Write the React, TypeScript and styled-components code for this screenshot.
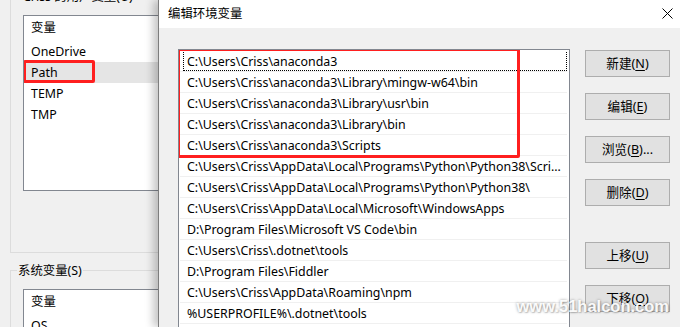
import React from 'react';
import styled, { createGlobalStyle } from 'styled-components';

const Global = createGlobalStyle`
  html, body { margin: 0; padding: 0; background: #f0f0f0; }
  body {
    font-family: "Noto Sans", "Noto Sans CJK SC", sans-serif;
    font-size: 12.4px;
    color: #000;
  }
`;

const Screen = styled.div`
  position: relative;
  width: 680px;
  height: 327px;
  display: flex;
  overflow: hidden;
  background: #f0f0f0;
`;

/* ---------- left (background) dialog ---------- */
const LeftPane = styled.div`
  width: 158px;
  flex: none;
  display: flex;
  flex-direction: column;
  padding-left: 10px;
  box-sizing: border-box;
`;

const UserGroup = styled.div`
  height: 253px;
  flex: none;
  box-sizing: border-box;
  border-left: 1px solid #dcdcdc;
  border-bottom: 1px solid #dcdcdc;
  padding-left: 12px;
  display: flex;
  flex-direction: column;
`;

const SysGroup = styled.div`
  flex: 1;
  margin-top: 17px;
  border-top: 1px solid #dcdcdc;
  border-left: 1px solid #dcdcdc;
  padding-left: 12px;
  display: flex;
  flex-direction: column;
`;

const GroupCaption = styled.div<{ $clipped?: boolean }>`
  height: 16px;
  line-height: 16px;
  white-space: nowrap;
  background: #f0f0f0;
  width: fit-content;
  padding: 0 1px;
  margin-top: ${(p) => (p.$clipped ? '-11px' : '-8px')};
  margin-left: ${(p) => (p.$clipped ? '-1px' : '-6px')};
`;

const VarList = styled.div<{ $h: number; $top: number }>`
  margin-top: ${(p) => p.$top}px;
  height: ${(p) => p.$h}px;
  flex: none;
  box-sizing: border-box;
  background: #fff;
  border: 1px solid #828790;
  border-right: none;
  overflow: hidden;
`;

const VarHeader = styled.div`
  height: 25px;
  line-height: 24px;
  padding-left: 7px;
`;

const VarRow = styled.div<{ $selected?: boolean }>`
  position: relative;
  height: 21px;
  line-height: 21px;
  padding-left: 7px;
  background: ${(p) => (p.$selected ? '#e5e5e5' : 'transparent')};
`;

const RedMark = styled.span`
  position: absolute;
  top: -2px;
  left: -1px;
  width: 72px;
  height: 23px;
  box-sizing: border-box;
  border: 3px solid #ff1f1f;
  border-radius: 2px;
`;

/* ---------- front dialog ---------- */
const Dialog = styled.div`
  position: relative;
  z-index: 1;
  flex: 1;
  min-width: 0;
  display: flex;
  flex-direction: column;
  background: #f0f0f0;
  border-left: 1px solid #7d7d7d;
  box-shadow: -5px 0 8px rgba(0, 0, 0, 0.22);
`;

const TitleBar = styled.div`
  height: 28px;
  flex: none;
  background: #fff;
  display: flex;
  align-items: center;
  justify-content: space-between;
  padding: 0 7px 2px 9px;
  box-sizing: border-box;
`;

const CloseIcon = styled.svg`
  width: 11px;
  height: 11px;
`;

const Body = styled.div`
  flex: 1;
  display: flex;
  gap: 15px;
  padding: 21px 10px 0 19px;
  min-height: 0;
`;

const PathList = styled.div`
  flex: 1;
  min-width: 0;
  height: 320px;
  box-sizing: border-box;
  background: #fff;
  border: 1px solid #828790;
  padding-top: 1px;
  overflow: hidden;
`;

const Marked = styled.div`
  position: relative;
  &::after {
    content: '';
    position: absolute;
    top: -3px;
    bottom: -2px;
    left: -2px;
    width: 343px;
    box-sizing: border-box;
    border: 3px solid #ff1f1f;
    border-radius: 2px;
    pointer-events: none;
  }
`;

const PathRow = styled.div<{ $focused?: boolean }>`
  position: relative;
  height: 21px;
  line-height: 21px;
  box-sizing: border-box;
  margin: 0 2px 0 1px;
  padding: 0 1px 0 7px;
  border-bottom: 1px solid #f0f0f0;
  white-space: nowrap;
  overflow: hidden;
  text-overflow: ellipsis;
  &::after {
    content: '';
    display: ${(p) => (p.$focused ? 'block' : 'none')};
    position: absolute;
    top: -1px;
    bottom: 0;
    left: 3px;
    right: 0;
    border: 1px dotted #000;
  }
`;

const ButtonCol = styled.div`
  width: 85px;
  flex: none;
  display: flex;
  flex-direction: column;
  gap: 16px;
  padding-top: 1px;
`;

const Btn = styled.button<{ $gapBefore?: number }>`
  height: 27px;
  width: 85px;
  box-sizing: border-box;
  margin-top: ${(p) => p.$gapBefore ?? 0}px;
  padding: 0;
  background: #e1e1e1;
  border: 1px solid #adadad;
  font-family: inherit;
  font-size: 12.6px;
  color: #000;
  line-height: 25px;
  u { text-decoration: underline; text-underline-offset: 2px; }
`;

const Watermark = styled.div`
  position: absolute;
  right: 11px;
  bottom: 11px;
  z-index: 2;
  font-family: "Liberation Sans", Arial, sans-serif;
  font-size: 16.5px;
  font-weight: bold;
  color: rgba(255, 255, 255, 0.96);
  text-shadow: 0 0 3px rgba(0, 0, 0, 0.4), 1px 1px 1px rgba(0, 0, 0, 0.15);
  pointer-events: none;
`;

const marked = [
  'C:\\Users\\Criss\\anaconda3',
  'C:\\Users\\Criss\\anaconda3\\Library\\mingw-w64\\bin',
  'C:\\Users\\Criss\\anaconda3\\Library\\usr\\bin',
  'C:\\Users\\Criss\\anaconda3\\Library\\bin',
  'C:\\Users\\Criss\\anaconda3\\Scripts',
];

const rest = [
  'C:\\Users\\Criss\\AppData\\Local\\Programs\\Python\\Python38\\Scripts\\',
  'C:\\Users\\Criss\\AppData\\Local\\Programs\\Python\\Python38\\',
  'C:\\Users\\Criss\\AppData\\Local\\Microsoft\\WindowsApps',
  'D:\\Program Files\\Microsoft VS Code\\bin',
  'C:\\Users\\Criss\\.dotnet\\tools',
  'D:\\Program Files\\Fiddler',
  'C:\\Users\\Criss\\AppData\\Roaming\\npm',
  '%USERPROFILE%\\.dotnet\\tools',
];

const buttons: { label: string; key: string; tail?: string; gap?: number }[] = [
  { label: '新建', key: 'N' },
  { label: '编辑', key: 'E' },
  { label: '浏览', key: 'B', tail: '...' },
  { label: '删除', key: 'D' },
  { label: '上移', key: 'U', gap: 20 },
  { label: '下移', key: 'O' },
];

export default function App() {
  return (
    <Screen>
      <Global />
      <LeftPane>
        <UserGroup>
          <GroupCaption $clipped>Criss 的用户变量(U)</GroupCaption>
          <VarList $h={176} $top={10}>
            <VarHeader>变量</VarHeader>
            <VarRow>OneDrive</VarRow>
            <VarRow $selected>
              Path
              <RedMark />
            </VarRow>
            <VarRow>TEMP</VarRow>
            <VarRow>TMP</VarRow>
          </VarList>
        </UserGroup>
        <SysGroup>
          <GroupCaption>系统变量(S)</GroupCaption>
          <VarList $h={80} $top={10}>
            <VarHeader>变量</VarHeader>
            <VarRow>OS</VarRow>
          </VarList>
        </SysGroup>
      </LeftPane>

      <Dialog>
        <TitleBar>
          <span>编辑环境变量</span>
          <CloseIcon viewBox="0 0 11 11">
            <path d="M0.5 0.5 L10.5 10.5 M10.5 0.5 L0.5 10.5" stroke="#000" strokeWidth="1" fill="none" />
          </CloseIcon>
        </TitleBar>
        <Body>
          <PathList>
            <Marked>
              {marked.map((p, i) => (
                <PathRow key={p} $focused={i === 0}>
                  {p}
                </PathRow>
              ))}
            </Marked>
            {rest.map((p) => (
              <PathRow key={p}>{p}</PathRow>
            ))}
          </PathList>
          <ButtonCol>
            {buttons.map((b) => (
              <Btn key={b.key} $gapBefore={b.gap}>
                {b.label}(<u>{b.key}</u>){b.tail ?? ''}
              </Btn>
            ))}
          </ButtonCol>
        </Body>
      </Dialog>
      <Watermark>www.51halcon.com</Watermark>
    </Screen>
  );
}
